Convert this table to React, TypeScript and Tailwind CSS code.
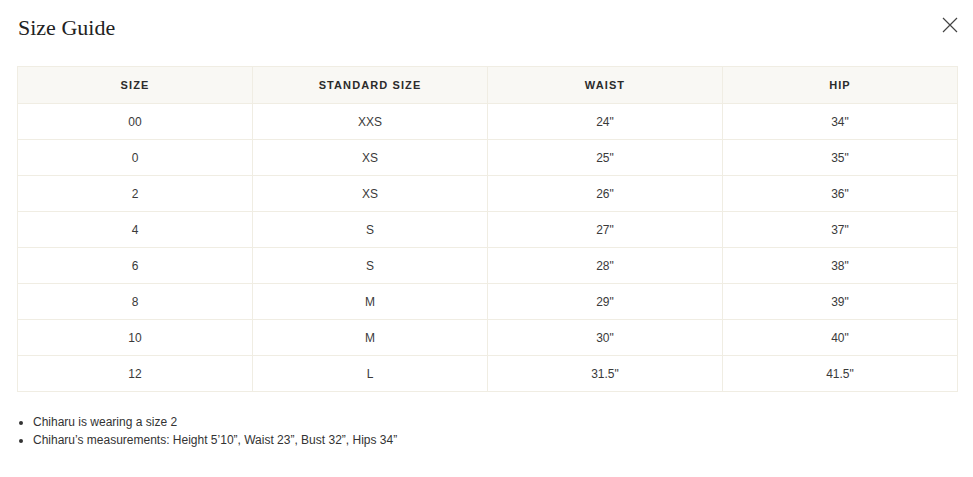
import React from 'react';

const rows: [string, string, string, string][] = [
  ['00', 'XXS', '24"', '34"'],
  ['0', 'XS', '25"', '35"'],
  ['2', 'XS', '26"', '36"'],
  ['4', 'S', '27"', '37"'],
  ['6', 'S', '28"', '38"'],
  ['8', 'M', '29"', '39"'],
  ['10', 'M', '30"', '40"'],
  ['12', 'L', '31.5"', '41.5"'],
];

const headers = ['Size', 'Standard Size', 'Waist', 'Hip'];

export default function App() {
  return (
    <div className="w-[973px] h-[477px] bg-white text-[#333] font-['Liberation_Sans',Arial,sans-serif]">
      {/* Header */}
      <div className="flex items-start justify-between pl-[18px] pr-[15px] pt-[14px] h-[66px]">
        <h1 className="font-['Liberation_Serif',serif] text-[22px] leading-[28px] text-[#222]">Size Guide</h1>
        <button className="mt-[3px] w-[16px] h-[16px] text-[#444]" aria-label="Close">
          <svg width="16" height="16" viewBox="0 0 16 16" fill="none">
            <path d="M1 1L15 15M15 1L1 15" stroke="currentColor" strokeWidth="1.2" />
          </svg>
        </button>
      </div>

      {/* Table */}
      <div className="px-[17px] w-[975px]">
        <table className="w-[941px] border-collapse table-fixed">
          <thead>
            <tr className="bg-[#f9f8f4] h-[37px]">
              {headers.map((h) => (
                <th
                  key={h}
                  className="border border-[#f0ede3] text-[11px] font-bold uppercase tracking-[0.1em] text-[#2b2b2b] text-center align-middle"
                >
                  {h}
                </th>
              ))}
            </tr>
          </thead>
          <tbody>
            {rows.map((r, i) => (
              <tr key={i} className="h-[36px]">
                {r.map((c, j) => (
                  <td key={j} className="border border-[#f0ede3] text-[12px] text-center align-middle text-[#3a3a3a]">
                    {c}
                  </td>
                ))}
              </tr>
            ))}
          </tbody>
        </table>
      </div>

      {/* Notes */}
      <ul className="mt-[21px] pl-[33px] list-disc text-[12px] leading-[18px] text-[#333]">
        <li>Chiharu is wearing a size 2</li>
        <li>Chiharu’s measurements: Height 5’10”, Waist 23”, Bust 32”, Hips 34”</li>
      </ul>
    </div>
  );
}
